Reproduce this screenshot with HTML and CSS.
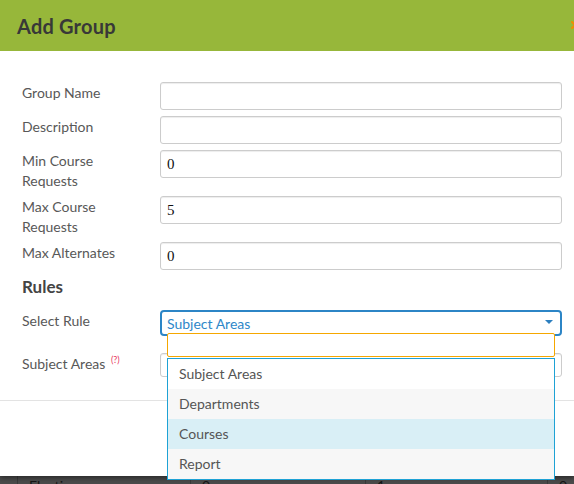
FILE: index.html
```html
<!DOCTYPE html>
<html>
<head>
<meta charset="utf-8">
<link rel="stylesheet" href="styles.css">
</head>
<body>
<div class="modal">
  <div class="header">
    <h1>Add Group</h1>
    <svg class="close" width="8" height="8" viewBox="0 0 8 8"><path d="M1 1L7 7M7 1L1 7" stroke="#f08c00" stroke-width="2" stroke-linecap="round"/></svg>
  </div>
  <div class="form">
    <div class="row">
      <label class="label">Group Name</label>
      <input class="input" type="text" value="">
    </div>
    <div class="row">
      <label class="label">Description</label>
      <input class="input" type="text" value="">
    </div>
    <div class="row">
      <label class="label">Min Course Requests</label>
      <input class="input" type="text" value="0">
    </div>
    <div class="row">
      <label class="label">Max Course Requests</label>
      <input class="input" type="text" value="5">
    </div>
    <div class="row">
      <label class="label">Max Alternates</label>
      <input class="input" type="text" value="0">
    </div>
    <h2 class="rules">Rules</h2>
    <div class="row select-row">
      <label class="label">Select Rule</label>
      <div class="select">
        <span>Subject Areas</span>
        <span class="caret"></span>
        <div class="dropdown">
          <div class="search"></div>
          <ul class="list">
            <li class="item">Subject Areas</li>
            <li class="item alt">Departments</li>
            <li class="item hover">Courses</li>
            <li class="item alt">Report</li>
          </ul>
        </div>
      </div>
    </div>
    <div class="row">
      <label class="label">Subject Areas <sup class="help">(?)</sup></label>
      <input class="input short" type="text" value="">
    </div>
  </div>
  <div class="modal-footer"></div>
</div>
<div class="page">
  <div class="cell"></div>
  <div class="cell">Electives</div>
  <div class="cell">0</div>
  <div class="cell">1</div>
  <div class="cell last">0</div>
</div>
</body>
</html>
```
FILE: styles.css
```css
html, body {
  margin: 0;
  padding: 0;
}
body {
  width: 574px;
  height: 484px;
  overflow: hidden;
  font-family: "Lato", "Liberation Sans", sans-serif;
  background: #4b4b4b;
}
.modal {
  position: relative;
  z-index: 1;
  height: 476px;
  background: #fff;
  box-shadow: 0 2px 5px rgba(0,0,0,0.45);
  display: flex;
  flex-direction: column;
}
.header {
  height: 51px;
  flex: none;
  background: #97b73a;
  display: flex;
  align-items: center;
  justify-content: space-between;
  padding-left: 17px;
  overflow: hidden;
}
.header h1 {
  margin: 0;
  font-size: 20px;
  font-weight: 700;
  color: #383838;
  letter-spacing: 0.2px;
}
.close {
  margin-right: -5px;
  margin-top: -2px;
  flex: none;
}
.form {
  padding: 31px 12px 17px 22px;
}
.row {
  display: flex;
  align-items: flex-start;
  margin-bottom: 6px;
}
.label {
  width: 110px;
  margin-right: 28px;
  flex: none;
  font-size: 14px;
  line-height: 20px;
  padding-top: 1px;
  margin-bottom: -1px;
  color: #585858;
}
.input {
  flex: 1;
  min-width: 0;
  width: auto;
  height: 28px;
  box-sizing: border-box;
  margin: 0;
  border: 1px solid #ccc;
  border-radius: 3px;
  box-shadow: inset 0 1px 1px rgba(0,0,0,0.075);
  padding: 0 6px;
  font-family: "Liberation Serif", "DejaVu Serif", serif;
  font-size: 15px;
  color: #111;
  background: #fff;
  outline: none;
}
.input.short {
  height: 24px;
}
.help {
  font-size: 9px;
  color: #e8345c;
  margin-left: 2px;
  vertical-align: 6px;
  line-height: 0;
}
.rules {
  margin: 0 0 12px;
  font-size: 17px;
  font-weight: 700;
  line-height: 22px;
  color: #444;
}
.select-row {
  margin-bottom: 17px;
}
.select {
  flex: 1;
  position: relative;
  height: 26px;
  box-sizing: border-box;
  border: 2px solid #2c85c6;
  border-radius: 4px;
  display: flex;
  align-items: center;
  padding: 0 7px 0 5px;
  color: #2e87c9;
  font-size: 14px;
}
.caret {
  margin-left: auto;
  width: 0;
  height: 0;
  border-left: 4px solid transparent;
  border-right: 4px solid transparent;
  border-top: 4px solid #2c7fbf;
  margin-top: -3px;
}
.dropdown {
  position: absolute;
  top: 21px;
  left: 5px;
  right: 5px;
  z-index: 5;
}
.search {
  height: 24px;
  box-sizing: border-box;
  border: 1px solid #f5a700;
  border-radius: 2px;
  background: #fff;
}
.list {
  list-style: none;
  margin: 1px 0 0;
  padding: 0;
  border: 1px solid #1ea2d5;
  background: #fff;
}
.item {
  height: 30px;
  line-height: 30px;
  padding-left: 11px;
  font-size: 14px;
  color: #555;
}
.item.alt {
  background: #f7f7f7;
}
.item.hover {
  background: #d9eff6;
}
.modal-footer {
  flex: 1;
  border-top: 1px solid #e3e3e3;
}
.page {
  height: 8px;
  display: grid;
  grid-template-columns: 18px 173px 175px 182px 1fr;
  background: #4b4b4b;
  overflow: hidden;
}
.cell {
  border-right: 1px solid #3a3a3a;
  padding-left: 11px;
  font-size: 14px;
  line-height: 20px;
  color: #151515;
}
.cell.last {
  border-right: none;
}
```
